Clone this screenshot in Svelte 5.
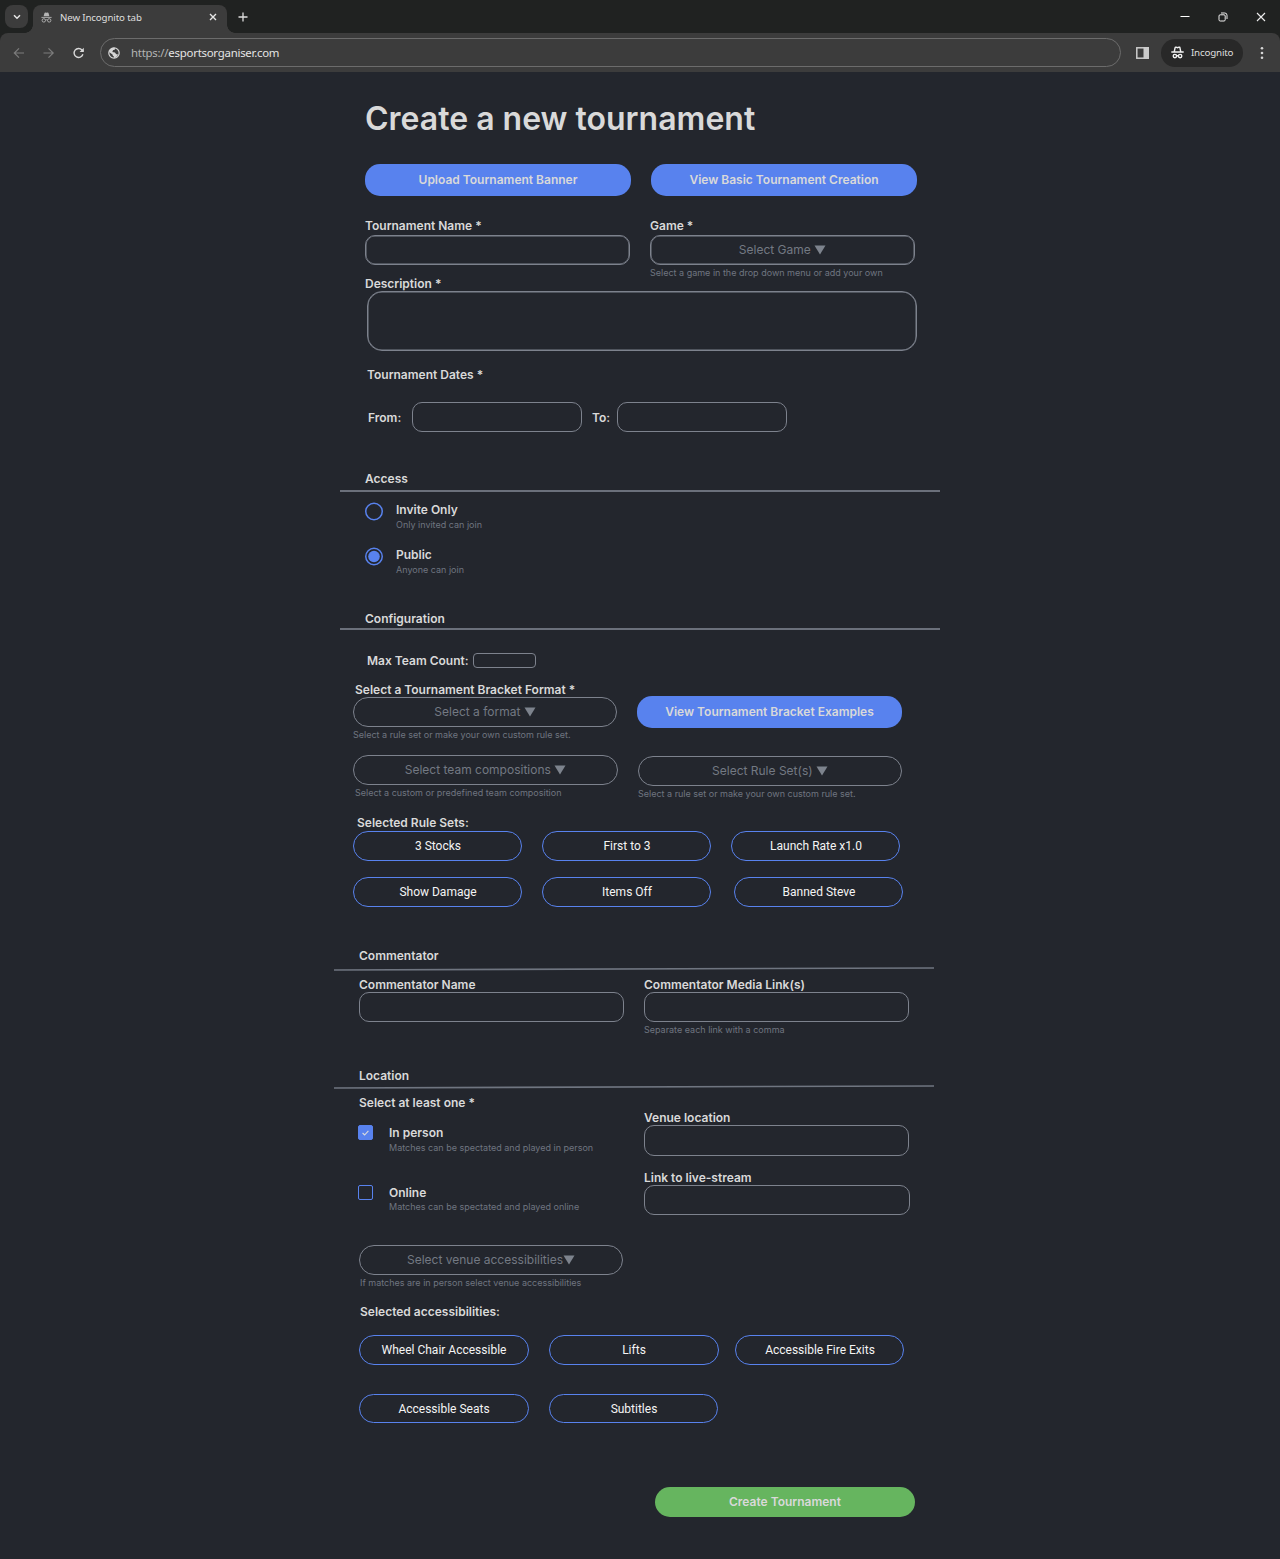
<script>
  const rules = [
    ['3 Stocks', 'First to 3', 'Launch Rate x1.0'],
    ['Show Damage', 'Items Off', 'Banned Steve'],
  ];
  const accessibilities = [
    ['Wheel Chair Accessible', 'Lifts', 'Accessible Fire Exits'],
    ['Accessible Seats', 'Subtitles'],
  ];
</script>

{#snippet arrow()}
  <svg class="arrow" viewBox="0 0 12 10"><path d="M.5.5h11L6 9.500z" fill="currentColor" /></svg>
{/snippet}

{#snippet radio(selected)}
  <svg class="radio" width="18" height="19" viewBox="0 0 18 19">
    <circle cx="9" cy="9.500" r="8.250" fill="none" stroke="#5882ee" stroke-width="1.500" />
    {#if selected}<circle cx="9" cy="9.500" r="5.800" fill="#5882ee" />{/if}
  </svg>
{/snippet}

<div class="browser">
  <div class="tabs">
    <div class="chevron">
      <svg width="8" height="6" viewBox="0 0 8 6"><path d="M1 1.200l3 3 3-3" fill="none" stroke="#e6e6e6" stroke-width="1.500" /></svg>
    </div>
    <div class="tab">
      <svg class="tab-icon" width="11" height="11" viewBox="0 0 11 11">
        <path d="M2.600 4.300L3.500.9Q3.700.3 4.300.4l1.200.4 1.200-.4Q7.300.3 7.500.9l.9 3.400z" fill="#b5b5b5" />
        <path d="M.4 5.400h10.200M4.500 8q1-.5 2 0" fill="none" stroke="#b5b5b5" stroke-width=".9" />
        <circle cx="2.800" cy="8.400" r="1.700" fill="none" stroke="#b5b5b5" stroke-width=".9" />
        <circle cx="8.200" cy="8.400" r="1.700" fill="none" stroke="#b5b5b5" stroke-width=".9" />
      </svg>
      <span>New Incognito tab</span>
      <svg class="close" width="8" height="8" viewBox="0 0 8 8"><path d="M1 1l6 6M7 1L1 7" stroke="#e6e6e6" stroke-width="1.400" /></svg>
    </div>
    <svg class="plus" width="10" height="10" viewBox="0 0 10 10"><path d="M5 .5v9M.5 5h9" stroke="#dedede" stroke-width="1.300" /></svg>
    <div class="window">
      <svg width="10" height="10" viewBox="0 0 10 10"><path d="M.5 4.500h9" stroke="#fff" stroke-width="1" /></svg>
      <svg width="10" height="10" viewBox="0 0 10 10" fill="none" stroke="#eee"><rect x="1" y="2.800" width="6.200" height="6.200" rx="1.200" /><path d="M3 1h3.800A2.200 2.200 0 0 1 9 3.200V7" /></svg>
      <svg width="10" height="10" viewBox="0 0 10 10"><path d="M1 1l8 8M9 1L1 9" stroke="#eee" stroke-width="1.100" /></svg>
    </div>
  </div>
  <div class="toolbar">
    <svg class="nav dim" viewBox="0 0 12 12"><path d="M11 6H1.500M6 1.300L1.300 6 6 10.700" /></svg>
    <svg class="nav dim" viewBox="0 0 12 12"><path d="M.5 6H10M5.500 1.300L10.200 6l-4.700 4.700" /></svg>
    <svg class="nav" viewBox="0 0 12 12"><path d="M9.900 7.300A4.500 4.500 0 1 1 9 3L10.200 4.300" /><path d="M10.800.8v4.200H6.600z" fill="#d8d8d8" stroke="none" /></svg>
    <div class="address">
      <svg width="12" height="12" viewBox="0 0 12 12"><circle cx="6" cy="6" r="5.200" fill="none" stroke="#d6d6d6" stroke-width="1.200" /><path d="M6.800.9c.5 1.600-.3 2-1.600 2.200-.3 1-.9 1.200-.7 1.900.2.600 2.500-.2 2.900 1 .2.800.8 1.400 2 1.400l.9-.4C9.300 9.300 8 10.800 6 11V9.500c-1.200-.2-1.300-1.200-1.500-2L1 5C1.300 2.300 3.700.3 6.800.9z" fill="#d6d6d6" /></svg>
      <span class="url"><span>https://</span>esportsorganiser.com</span>
    </div>
    <svg class="panel" width="13" height="12" viewBox="0 0 13 12"><rect x=".8" y=".8" width="11.400" height="10.400" fill="none" stroke="#ccc" stroke-width="1.500" /><path d="M7.500 0H13v12H7.500z" fill="#ccc" /></svg>
    <div class="badge">
      <svg width="13" height="13" viewBox="0 0 13 13" fill="none" stroke="#f2f2f2" stroke-width="1.400">
        <path d="M3.300 5.500l.8-3.800Q4.300 1 5 1.200l1.500.5L8 1.200q.7-.2.900.5l.8 3.800M.3 6h12.400M5.300 9.700h2.400" />
        <circle cx="3.900" cy="10.100" r="1.700" />
        <circle cx="9.100" cy="10.100" r="1.700" />
      </svg>
      <span>Incognito</span>
    </div>
    <svg class="dots" width="4" height="14" viewBox="0 0 4 14" fill="#d6d6d6"><circle cx="2" cy="2.300" r="1.300" /><circle cx="2" cy="7" r="1.300" /><circle cx="2" cy="11.700" r="1.300" /></svg>
  </div>
</div>

<main>
  <h1>Create a new tournament</h1>

  <div class="actions">
    <button class="primary">Upload Tournament Banner</button>
    <button class="primary">View Basic Tournament Creation</button>
  </div>

  <div class="pair basics">
    <div class="field">
      <p class="label">Tournament Name *</p>
      <div class="box strong"></div>
    </div>
    <div class="field">
      <p class="label">Game *</p>
      <div class="box strong">Select Game {@render arrow()}</div>
      <p class="hint">Select a game in the drop down menu or add your own</p>
    </div>
  </div>

  <div class="description">
    <p class="label">Description *</p>
    <div class="box strong area"></div>
  </div>

  <p class="label dates-title">Tournament Dates *</p>
  <div class="dates">
    <span class="label from">From:</span>
    <div class="box"></div>
    <span class="label to">To:</span>
    <div class="box"></div>
  </div>

  <section class="access">
    <h2 class="label">Access</h2>
    <hr />
    <div class="option">
      {@render radio(false)}
      <div><p class="label">Invite Only</p><p class="hint">Only invited can join</p></div>
    </div>
    <div class="option">
      {@render radio(true)}
      <div><p class="label">Public</p><p class="hint">Anyone can join</p></div>
    </div>
  </section>

  <section class="config">
    <h2 class="label">Configuration</h2>
    <hr />
    <div class="count"><span class="label">Max Team Count:</span><div class="box"></div></div>
    <div class="formats">
      <div class="column">
        <p class="label indent">Select a Tournament Bracket Format *</p>
        <div class="box round narrow">Select a format {@render arrow()}</div>
        <p class="hint">Select a rule set or make your own custom rule set.</p>
        <div class="box round second">Select team compositions {@render arrow()}</div>
        <p class="hint indent">Select a custom or predefined team composition</p>
      </div>
      <div class="column right">
        <button class="primary">View Tournament Bracket Examples</button>
        <div class="box round third">Select Rule Set(s) {@render arrow()}</div>
        <p class="hint pushed">Select a rule set or make your own custom rule set.</p>
      </div>
    </div>
    <p class="label rules-title">Selected Rule Sets:</p>
    <div class="rules">
      {#each rules as row}
        <div class="pills">
          {#each row as name}<span class="pill">{name}</span>{/each}
        </div>
      {/each}
    </div>
  </section>

  <section class="commentator shifted">
    <h2 class="label">Commentator</h2>
    <svg class="slope" viewBox="0 0 600 4"><path d="M0 3L600 1" /></svg>
    <div class="pair">
      <div class="field"><p class="label">Commentator Name</p><div class="box"></div></div>
      <div class="field"><p class="label">Commentator Media Link(s)</p><div class="box"></div><p class="hint">Separate each link with a comma</p></div>
    </div>
  </section>

  <section class="location shifted">
    <h2 class="label">Location</h2>
    <svg class="slope" viewBox="0 0 600 4"><path d="M0 3L600 1" /></svg>
    <div class="pair">
      <div class="checks">
        <p class="label">Select at least one *</p>
        <div class="check">
          <span class="tick on"><svg width="7" height="6" viewBox="0 0 7 6"><path d="M.6 3l2 2L6.400.8" fill="none" stroke="#dcdcdc" stroke-width="1.100" /></svg></span>
          <div><p class="label">In person</p><p class="hint">Matches can be spectated and played in person</p></div>
        </div>
        <div class="check online">
          <span class="tick"></span>
          <div><p class="label">Online</p><p class="hint">Matches can be spectated and played online</p></div>
        </div>
      </div>
      <div class="field venue">
        <p class="label">Venue location</p>
        <div class="box tall"></div>
        <p class="label">Link to live-stream</p>
        <div class="box wide"></div>
      </div>
    </div>
    <div class="venue-access">
      <div class="box round">Select venue accessibilities{@render arrow()}</div>
      <p class="hint">If matches are in person select venue accessibilities</p>
      <p class="label">Selected accessibilities:</p>
    </div>
    <div class="supports">
      {#each accessibilities as row}
        <div class="pills">
          {#each row as name}<span class="pill">{name}</span>{/each}
        </div>
      {/each}
    </div>
  </section>

  <button class="submit">Create Tournament</button>
</main>

<style>
  :global(body) {
    margin: 0;
    background: #23262d;
  }
  :global(*) {
    box-sizing: border-box;
  }
  p, h1, h2 {
    margin: 0;
  }
  button {
    border: 0;
    padding: 0;
    display: block;
  }
  svg {
    display: block;
    flex: none;
  }

  /* Browser chrome */
  .browser {
    height: 72px;
    background: #202221;
    font-family: 'Noto Sans', 'Open Sans', sans-serif;
    color: #dedede;
  }
  .tabs {
    display: flex;
    height: 33px;
    padding-left: 5px;
  }
  .chevron {
    width: 23px;
    height: 23px;
    margin-top: 5px;
    border-radius: 8px;
    background: #3c3c3c;
    display: grid;
    place-items: center;
  }
  .tab {
    position: relative;
    margin: 5px 0 0 5px;
    width: 194px;
    height: 28px;
    border-radius: 8px 8px 0 0;
    background: #3c3c3c;
    display: flex;
    align-items: center;
    padding: 0 10px 4px 8px;
    font-size: 9.7px;
    letter-spacing: -0.12px;
  }
  .tab::before,
  .tab::after {
    content: '';
    position: absolute;
    bottom: 0;
    width: 8px;
    height: 8px;
  }
  .tab::before {
    left: -8px;
    background: radial-gradient(circle at 0 0, transparent 7.5px, #3c3c3c 8px);
  }
  .tab::after {
    right: -8px;
    background: radial-gradient(circle at 100% 0, transparent 7.5px, #3c3c3c 8px);
  }
  .tab span {
    margin-left: 8px;
    flex: 1;
    white-space: nowrap;
  }
  .plus {
    margin: 12px 0 0 11px;
  }
  .window {
    margin: 12px 14px 0 auto;
    display: flex;
    gap: 28px;
  }
  .toolbar {
    height: 39px;
    background: #3c3c3c;
    border-radius: 8px 8px 0 0;
    display: flex;
    align-items: center;
    padding-left: 13px;
  }
  .nav {
    width: 12px;
    height: 12px;
    margin-right: 18px;
    fill: none;
    stroke: #d8d8d8;
    stroke-width: 1.4;
  }
  .dim {
    stroke: #7c7c7c;
    stroke-width: 1.2;
  }
  .address {
    width: 1021px;
    height: 29px;
    margin-left: -3px;
    border: 1px solid #6c6c6c;
    border-radius: 15px;
    display: flex;
    align-items: center;
    padding-left: 7px;
  }
  .url {
    margin-left: 11px;
    font-size: 11.4px;
    letter-spacing: -0.24px;
    color: #e4e4e4;
  }
  .url span {
    color: #b4b4b4;
  }
  .panel {
    margin-left: 15px;
  }
  .badge {
    margin-left: 12px;
    width: 82px;
    height: 28px;
    border-radius: 14px;
    background: #282828;
    display: flex;
    align-items: center;
    gap: 7px;
    padding-left: 10px;
    font-size: 9.8px;
    letter-spacing: -0.2px;
  }
  .dots {
    margin-left: 16.5px;
  }

  /* Form */
  main {
    width: 600px;
    margin-left: 340px;
    height: 1487px;
    padding-top: 27px;
    font-family: Inter, sans-serif;
    color: #d9d9d9;
  }
  h1 {
    margin-left: 25px;
    font-size: 32px;
    line-height: 40px;
    font-weight: 600;
    font-optical-sizing: none;
    font-variation-settings: 'opsz' 14;
    white-space: nowrap;
  }
  .label {
    font-size: 12px;
    line-height: 14px;
    font-weight: 600;
    white-space: nowrap;
  }
  .hint {
    font-size: 9px;
    line-height: 14px;
    color: #6f7580;
    white-space: nowrap;
  }
  .box {
    height: 30px;
    border: 1px solid #7d828d;
    border-radius: 10px;
    display: flex;
    align-items: center;
    justify-content: center;
    font-size: 12px;
    line-height: 14px;
    padding-bottom: 1px;
    color: #737983;
    white-space: pre;
  }
  .strong {
    box-shadow: inset 0 0 0 0.5px #7d828d;
  }
  .round {
    border-radius: 15px;
  }
  .arrow {
    width: 12px;
    height: 10px;
    color: #7d838d;
  }
  .primary,
  .submit {
    height: 32px;
    border-radius: 15px;
    background: #5882ee;
    color: #d9d9d9;
    font: 600 12px/14px Inter, sans-serif;
  }
  .actions {
    display: flex;
    gap: 20px;
    margin: 25px 0 0 25px;
  }
  .actions .primary {
    width: 266px;
  }
  .pair {
    display: grid;
    grid-template-columns: 265px 265px;
    column-gap: 20px;
    margin-left: 25px;
  }
  .basics {
    margin-top: 23px;
    height: 58px;
  }
  .basics .box {
    margin-top: 2px;
  }
  .basics .hint {
    margin-top: 1px;
  }
  .description {
    margin-left: 25px;
  }
  .area {
    width: 550px;
    height: 60px;
    margin-left: 2px;
    border-radius: 15px;
  }
  .dates-title {
    margin: 17px 0 0 27px;
  }
  .dates {
    display: flex;
    align-items: center;
    margin: 20px 0 0 28px;
  }
  .dates .box {
    width: 170px;
  }
  .dates .label {
    padding-top: 1px;
  }
  .from {
    width: 44px;
  }
  .to {
    width: 25px;
    margin-left: 10px;
  }
  h2.label {
    margin-left: 25px;
  }
  hr {
    margin: 0;
    border: 0;
    height: 2px;
    background: #6b707b;
  }
  .access {
    margin-top: 40px;
  }
  .access hr {
    margin-top: 4px;
  }
  .option {
    display: flex;
    gap: 13px;
    margin: 11px 0 0 25px;
    height: 34px;
  }
  .option .hint {
    margin-top: 1px;
  }
  .radio {
    margin-top: -1px;
  }
  .config {
    margin-top: 30px;
  }
  .config hr {
    margin-top: 2px;
  }
  .count {
    display: flex;
    align-items: center;
    margin: 23px 0 0 27px;
  }
  .count .label {
    width: 106px;
  }
  .count .box {
    width: 63px;
    height: 15px;
    border-radius: 4px;
  }
  .formats {
    display: flex;
    gap: 19px;
    margin: 15px 0 0 13px;
  }
  .column {
    width: 265px;
  }
  .narrow {
    width: 264px;
  }
  .column .hint {
    margin-top: 1px;
  }
  .column .indent {
    margin-left: 2px;
  }
  .second {
    margin-top: 13px;
  }
  .right {
    padding-top: 13px;
  }
  .right .primary {
    width: 265px;
  }
  .third {
    width: 264px;
    margin: 28px 0 0 1px;
  }
  .column .pushed {
    margin-left: 1px;
  }
  .rules-title {
    margin: 15px 0 0 17px;
  }
  .pills {
    display: flex;
    gap: 20px;
  }
  .pill {
    width: 169px;
    height: 30px;
    padding-left: 1px;
    border: 1px solid #5882ee;
    border-radius: 15px;
    display: flex;
    align-items: center;
    justify-content: center;
    font: 12px Roboto, sans-serif;
    color: #f4f4f4;
  }
  .rules {
    margin: 1px 0 0 13px;
    display: grid;
    gap: 16px;
  }
  .rules .pills:last-child .pill:last-child {
    margin-left: 3px;
  }
  .shifted {
    margin-left: -6px;
  }
  .commentator {
    margin-top: 42px;
  }
  .slope {
    width: 600px;
    height: 4px;
    stroke: #6f7580;
    stroke-width: 1.6;
  }
  .commentator .slope {
    margin-top: 4px;
  }
  .commentator .pair {
    margin-top: 7px;
    height: 60px;
  }
  .commentator .hint {
    margin-top: 1px;
  }
  .location {
    margin-top: 31px;
  }
  .location .slope {
    margin-top: 2px;
  }
  .location .pair {
    height: 156px;
    padding-top: 7px;
  }
  .check {
    display: flex;
    gap: 16px;
    margin: 15px 0 0 -1px;
    height: 31px;
  }
  .check .hint {
    margin-top: 1px;
  }
  .check > div {
    margin-top: 1px;
  }
  .online {
    margin-top: 29px;
  }
  .online .hint {
    margin-top: 0;
  }
  .tick {
    width: 15px;
    height: 15px;
    border: 1px solid #5882ee;
    border-radius: 2px;
    display: grid;
    place-items: center;
  }
  .tick.on {
    background: #5882ee;
  }
  .venue {
    padding-top: 15px;
  }
  .tall {
    height: 31px;
    margin-bottom: 15px;
  }
  .wide {
    width: 266px;
  }
  .venue-access {
    width: 264px;
    margin-left: 25px;
  }
  .venue-access .hint,
  .venue-access .label {
    margin: 1px 0 0 1px;
  }
  .venue-access .label {
    margin-top: 15px;
  }
  .supports {
    margin: 16px 0 0 25px;
    display: grid;
    gap: 29px;
  }
  .supports .pill {
    width: 170px;
    padding-left: 0;
  }
  .supports .pill:nth-child(3) {
    width: 169px;
    padding-left: 1px;
    margin-left: -4px;
  }
  .supports .pills:last-child .pill {
    height: 29px;
  }
  .supports .pills:last-child .pill:last-child {
    width: 169px;
    padding-left: 1px;
  }
  .submit {
    width: 260px;
    height: 30px;
    margin: 64px 0 0 315px;
    background: #66b55f;
  }
</style>
